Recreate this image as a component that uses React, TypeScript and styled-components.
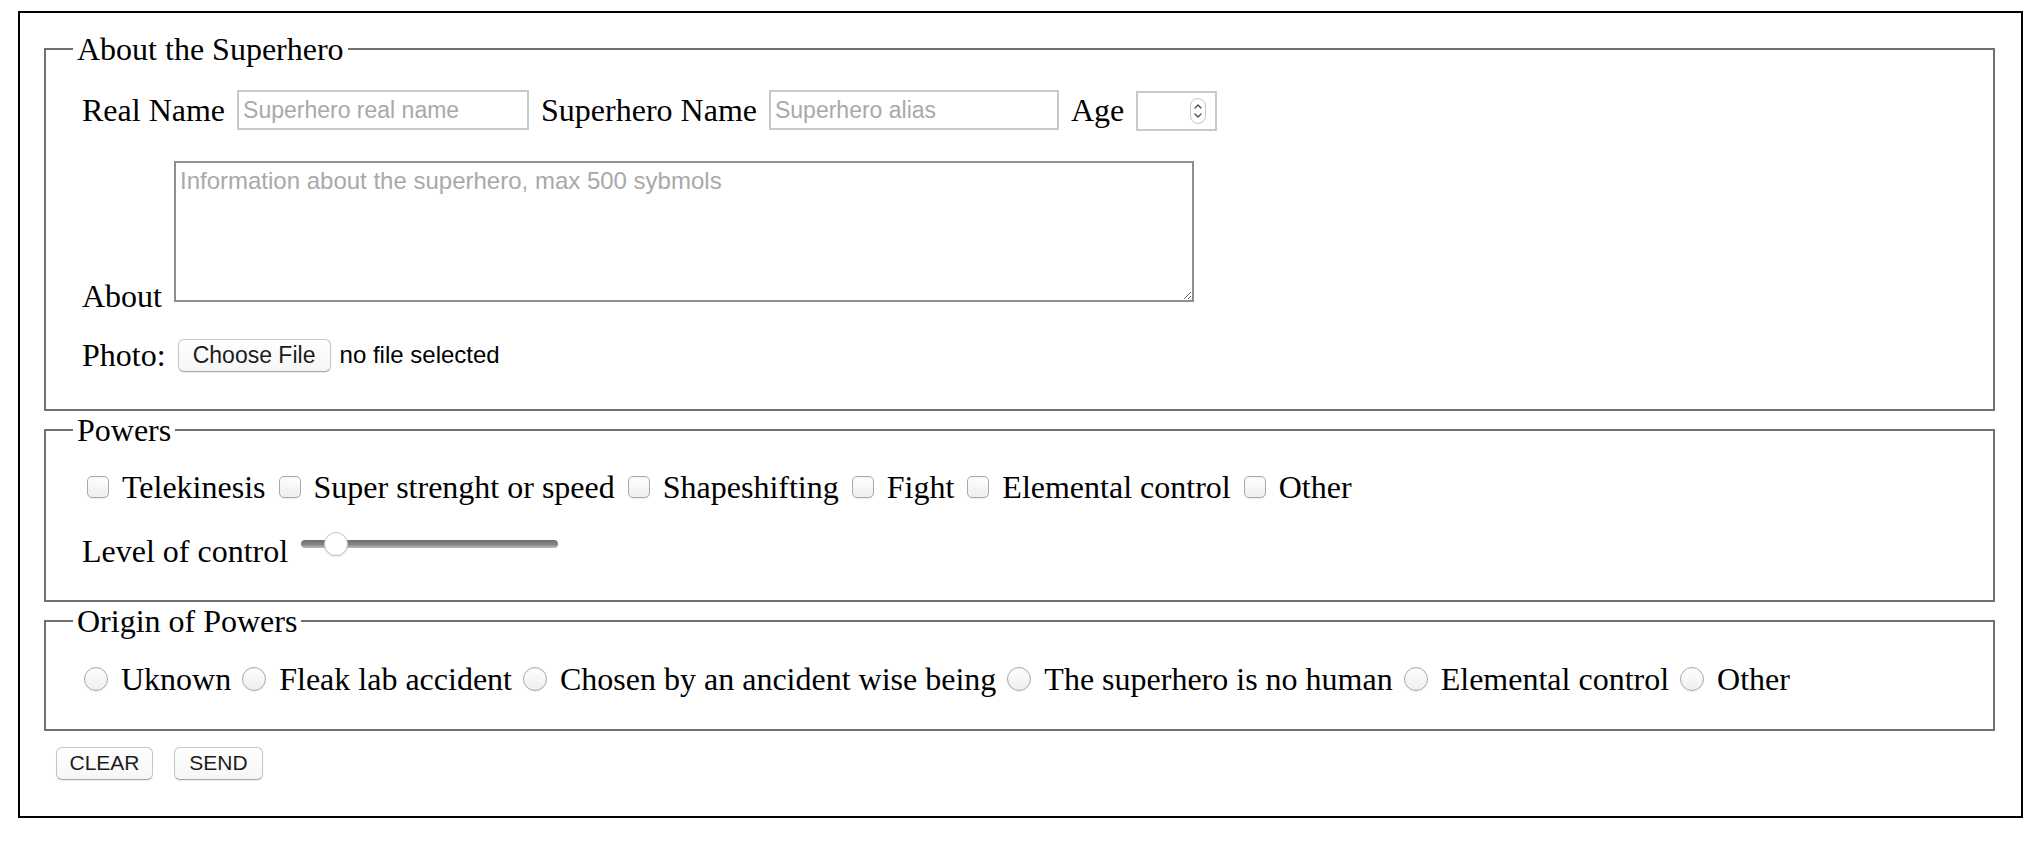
import React from "react";
import styled, { createGlobalStyle } from "styled-components";

const GlobalStyle = createGlobalStyle`
  html, body { margin: 0; padding: 0; background: #fff; }
  body { font-family: "Liberation Serif", "Times New Roman", serif; color: #000; }
  * { box-sizing: border-box; }
`;

const Form = styled.form`
  width: 2005px;
  margin: 11px 0 0 18px;
  border: 2px solid #000;
  padding: 17px 26px 35px 24px;
  font-size: 32px;
`;

const Fieldset = styled.fieldset<{ $pt: number; $pb: number }>`
  margin: 0;
  min-width: 0;
  border: 2px solid #707070;
  padding: ${(p) => p.$pt}px 24px ${(p) => p.$pb}px 36px;
`;

const Legend = styled.legend`
  margin-left: -9px;
  padding: 0 4px;
  font-size: 32px;
  line-height: 38px;
`;

const Row = styled.div<{ $mt?: number; $align?: string; $gap?: number; $pl?: number }>`
  display: flex;
  align-items: ${(p) => p.$align ?? "center"};
  gap: ${(p) => p.$gap ?? 12}px;
  margin-top: ${(p) => p.$mt ?? 0}px;
  padding-left: ${(p) => p.$pl ?? 0}px;
  min-height: 36px;
`;

const Label = styled.label`
  font-size: 32px;
  line-height: 36px;
  white-space: nowrap;
`;

const TextInput = styled.input<{ $w: number }>`
  width: ${(p) => p.$w}px;
  height: 40px;
  margin: 0;
  padding: 0 4px;
  border: 2px solid #c9c9c9;
  border-radius: 0;
  background: #fff;
  font-family: "Liberation Sans", Arial, sans-serif;
  font-size: 23px;
  color: #000;
  outline: none;
  &::placeholder { color: #a9a9a9; }
`;

const NumberBox = styled.div`
  width: 81px;
  height: 40px;
  margin-top: 2px;
  border: 2px solid #c9c9c9;
  display: flex;
  align-items: center;
  padding-right: 9px;
  background: #fff;
`;

const NumberField = styled.input`
  flex: 1;
  min-width: 0;
  height: 100%;
  border: none;
  outline: none;
  padding: 0 4px;
  margin: 0;
  font-family: "Liberation Sans", Arial, sans-serif;
  font-size: 23px;
  appearance: textfield;
  -moz-appearance: textfield;
  &::-webkit-inner-spin-button,
  &::-webkit-outer-spin-button { -webkit-appearance: none; margin: 0; }
`;

const TextArea = styled.textarea`
  width: 1020px;
  height: 141px;
  margin: 0 0 12px 0;
  padding: 4px 4px;
  border: 2px solid #8f8f8f;
  border-radius: 0;
  font-family: "Liberation Sans", Arial, sans-serif;
  font-size: 24px;
  line-height: 28px;
  resize: both;
  outline: none;
  &::placeholder { color: #a9a9a9; }
`;

const FilePicker = styled.label`
  display: flex;
  align-items: center;
  gap: 9px;
  cursor: pointer;
`;

const HiddenFile = styled.input`
  display: none;
`;

const MacButton = styled.span<{ $w: number; $fs: number }>`
  display: inline-flex;
  align-items: center;
  justify-content: center;
  width: ${(p) => p.$w}px;
  height: 33px;
  border: 1px solid #c4c4c4;
  border-bottom-color: #a9a9a9;
  border-radius: 6px;
  background: linear-gradient(#ffffff, #f6f6f6);
  box-shadow: 0 1px 1px rgba(0, 0, 0, 0.08);
  font-family: "Liberation Sans", Arial, sans-serif;
  font-size: ${(p) => p.$fs}px;
  color: #1c1c1c;
  white-space: nowrap;
`;

const ActionButton = styled.button<{ $w: number }>`
  display: inline-flex;
  align-items: center;
  justify-content: center;
  width: ${(p) => p.$w}px;
  height: 33px;
  padding: 0;
  margin: 0;
  border: 1px solid #c4c4c4;
  border-bottom-color: #a9a9a9;
  border-radius: 6px;
  background: linear-gradient(#ffffff, #f6f6f6);
  box-shadow: 0 1px 1px rgba(0, 0, 0, 0.08);
  font-family: "Liberation Sans", Arial, sans-serif;
  font-size: 21px;
  color: #1c1c1c;
`;

const FileName = styled.span`
  font-family: "Liberation Sans", Arial, sans-serif;
  font-size: 24px;
  color: #000;
`;

const Option = styled.label<{ $gap: number }>`
  display: flex;
  align-items: center;
  gap: ${(p) => p.$gap}px;
  font-size: 32px;
  line-height: 36px;
  white-space: nowrap;
`;

const Check = styled.input<{ $round?: boolean }>`
  appearance: none;
  -webkit-appearance: none;
  margin: 0;
  width: ${(p) => (p.$round ? 24 : 22)}px;
  height: ${(p) => (p.$round ? 24 : 22)}px;
  border: 1px solid #a9a9a9;
  border-radius: ${(p) => (p.$round ? "50%" : "5px")};
  background: linear-gradient(#ffffff, #eeeeee);
  box-shadow: inset 0 1px 1px rgba(0, 0, 0, 0.04), 0 1px 0 rgba(0, 0, 0, 0.06);
  flex: none;
`;

const Range = styled.input`
  -webkit-appearance: none;
  appearance: none;
  align-self: flex-start;
  width: 257px;
  height: 24px;
  margin: -1px 0 0 0;
  background: transparent;
  &::-webkit-slider-runnable-track {
    height: 8px;
    border-radius: 4px;
    background: linear-gradient(#6e6e6e, #858585 55%, #bdbdbd);
  }
  &::-webkit-slider-thumb {
    -webkit-appearance: none;
    width: 24px;
    height: 24px;
    margin-top: -8px;
    border-radius: 50%;
    background: #fff;
    border: 1px solid #c6c6c6;
    box-shadow: 0 1px 1px rgba(0, 0, 0, 0.12);
  }
`;

const Spinner = () => (
  <svg width="16" height="26" viewBox="0 0 16 26" aria-hidden="true">
    <rect x="0.5" y="0.5" width="15" height="25" rx="7.5" fill="#fff" stroke="#c4c4c4" />
    <path d="M5 10 L8 7 L11 10" fill="none" stroke="#4a4a4a" strokeWidth="1.3" strokeLinecap="round" strokeLinejoin="round" />
    <path d="M5 16 L8 19 L11 16" fill="none" stroke="#4a4a4a" strokeWidth="1.3" strokeLinecap="round" strokeLinejoin="round" />
  </svg>
);

const powers = ["Telekinesis", "Super strenght or speed", "Shapeshifting", "Fight", "Elemental control", "Other"];
const origins = [
  "Uknown",
  "Fleak lab accident",
  "Chosen by an ancident wise being",
  "The superhero is no human",
  "Elemental control",
  "Other",
];

export default function App() {
  return (
    <>
      <GlobalStyle />
      <Form onSubmit={(e) => e.preventDefault()}>
        <Fieldset $pt={21} $pb={36}>
          <Legend>About the Superhero</Legend>
          <Row>
            <Label htmlFor="realName">Real Name</Label>
            <TextInput id="realName" $w={292} placeholder="Superhero real name" />
            <Label htmlFor="alias">Superhero Name</Label>
            <TextInput id="alias" $w={290} placeholder="Superhero alias" />
            <Label htmlFor="age">Age</Label>
            <NumberBox>
              <NumberField id="age" type="number" />
              <Spinner />
            </NumberBox>
          </Row>
          <Row $mt={30} $align="flex-end">
            <Label htmlFor="about">About</Label>
            <TextArea id="about" placeholder="Information about the superhero, max 500 sybmols" />
          </Row>
          <Row $mt={23}>
            <Label htmlFor="photo">Photo:</Label>
            <FilePicker>
              <HiddenFile id="photo" type="file" />
              <MacButton $w={153} $fs={23}>Choose File</MacButton>
              <FileName>no file selected</FileName>
            </FilePicker>
          </Row>
        </Fieldset>

        <Fieldset $pt={20} $pb={31}>
          <Legend>Powers</Legend>
          <Row $gap={13} $pl={5}>
            {powers.map((p) => (
              <Option key={p} $gap={13}>
                <Check type="checkbox" />
                {p}
              </Option>
            ))}
          </Row>
          <Row $mt={28} $gap={13}>
            <Label htmlFor="level">Level of control</Label>
            <Range id="level" type="range" min={0} max={100} defaultValue={10} />
          </Row>
        </Fieldset>

        <Fieldset $pt={21} $pb={32}>
          <Legend>Origin of Powers</Legend>
          <Row $gap={11} $pl={2}>
            {origins.map((o) => (
              <Option key={o} $gap={13}>
                <Check type="radio" name="origin" $round />
                {o}
              </Option>
            ))}
          </Row>
        </Fieldset>

        <Row $mt={14} $gap={21} $pl={12}>
          <ActionButton type="reset" $w={97}>CLEAR</ActionButton>
          <ActionButton type="submit" $w={89}>SEND</ActionButton>
        </Row>
      </Form>
    </>
  );
}
